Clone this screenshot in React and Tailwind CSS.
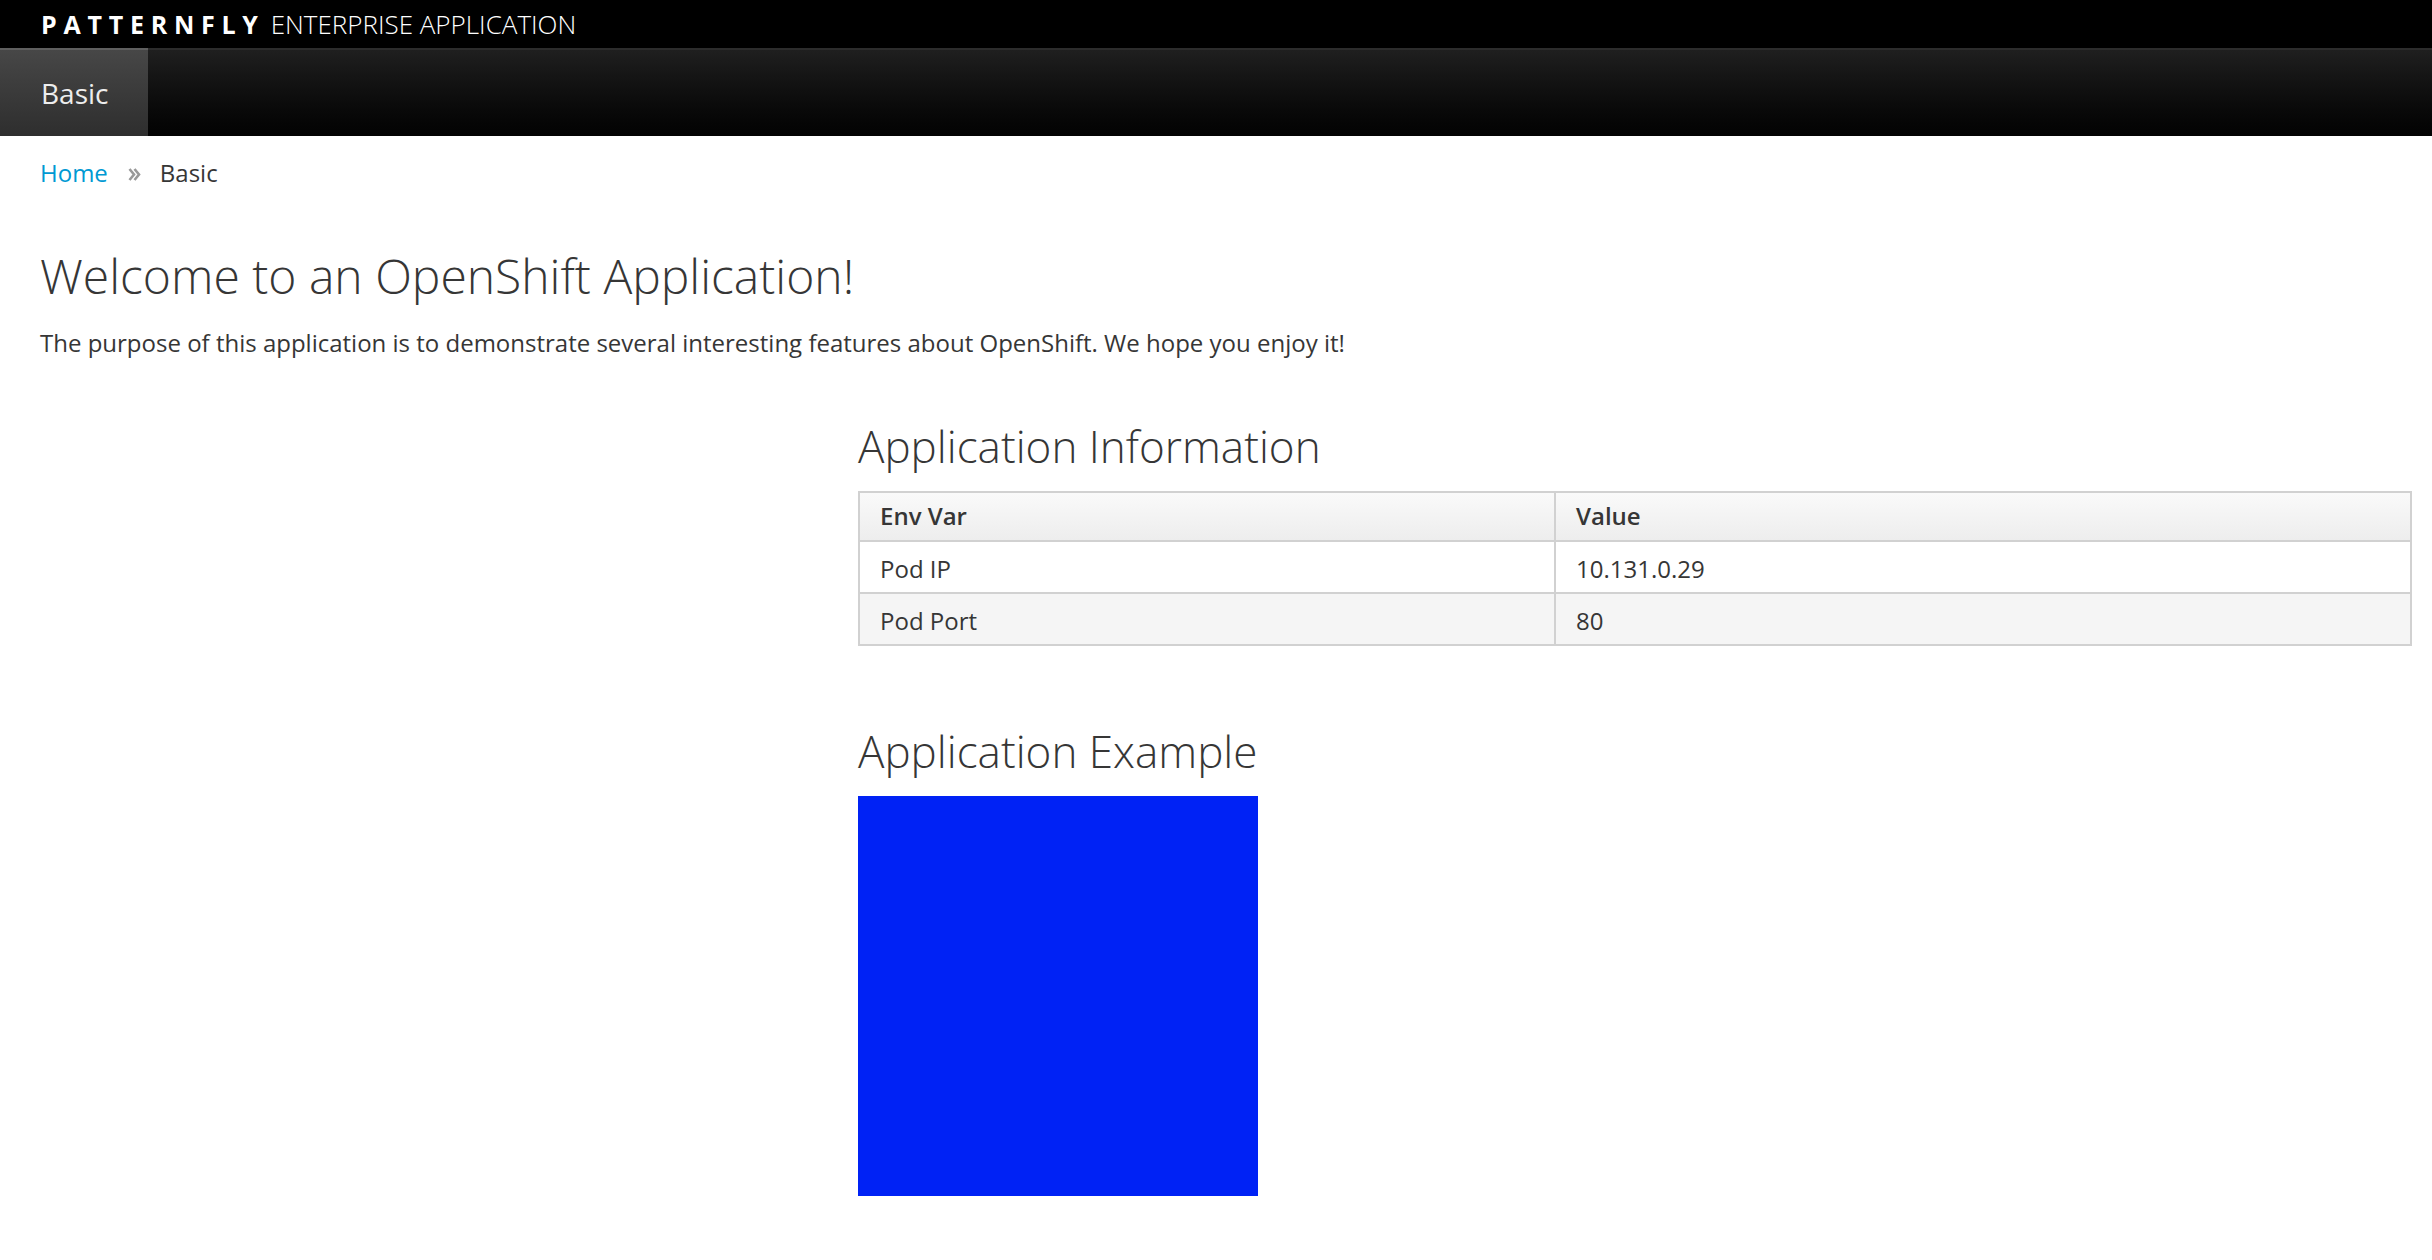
export default function App() {
  return (
    <div className="min-h-screen bg-white text-[#363636] font-['Open_Sans',sans-serif]">
      <div className="h-[48px] bg-black flex items-center pl-[41px]">
        <span className="text-white font-bold text-[25px] tracking-[0.27em] leading-none">PATTERNFLY</span>
        <span className="text-white font-light text-[26px] ml-[6px] leading-none">ENTERPRISE APPLICATION</span>
      </div>
      <div className="h-[88px] flex bg-linear-to-b from-[#1f1f1f] to-[#030303] border-t-2 border-[#2c2c2c]">
        <div className="w-[148px] -mt-[2px] h-[88px] border-t-2 border-[#5f5f5f] bg-linear-to-b from-[#474747] to-[#2e2e2e] text-[28px] text-[#ededed] pl-[41px] flex items-center">
          Basic
        </div>
      </div>

      <div className="pl-[40px] pr-[20px]">
        <div className="mt-[17px] flex items-center text-[24px] leading-[40px]">
          <a className="text-[#0099d3]">Home</a>
          <svg className="ml-[20px] mr-[19px] mt-[2px]" width="13" height="15" viewBox="0 0 13 15">
            <polyline points="1.5,2 6,7.5 1.5,13" fill="none" stroke="#999" strokeWidth="2.6" />
            <polyline points="6.5,2 11,7.5 6.5,13" fill="none" stroke="#999" strokeWidth="2.6" />
          </svg>
          <span>Basic</span>
        </div>

        <h1 className="mt-[57px] text-[48px] font-light leading-[1.1]">Welcome to an OpenShift Application!</h1>
        <p className="mt-[20px] text-[24px] leading-[40px]">
          The purpose of this application is to demonstrate several interesting features about OpenShift. We hope you enjoy it!
        </p>

        <div className="ml-[818px]">
          <h2 className="mt-[59px] text-[44px] font-light leading-[1.1]">Application Information</h2>
          <table className="mt-[21px] w-full border-collapse border-2 border-[#d1d1d1] text-[24px] leading-[40px]">
            <thead>
              <tr className="bg-linear-to-b from-[#fafafa] to-[#ededed]">
                <th className="w-[696px] border-2 border-[#d1d1d1] text-left font-semibold px-[20px] pt-[3px] pb-[4px]">Env Var</th>
                <th className="border-2 border-[#d1d1d1] text-left font-semibold px-[20px] pt-[3px] pb-[4px]">Value</th>
              </tr>
            </thead>
            <tbody>
              <tr className="bg-white">
                <td className="border-2 border-[#d1d1d1] px-[20px] pt-[7px] pb-[3px]">Pod IP</td>
                <td className="border-2 border-[#d1d1d1] px-[20px] pt-[7px] pb-[3px]">10.131.0.29</td>
              </tr>
              <tr className="bg-[#f5f5f5]">
                <td className="border-2 border-[#d1d1d1] px-[20px] pt-[7px] pb-[3px]">Pod Port</td>
                <td className="border-2 border-[#d1d1d1] px-[20px] pt-[7px] pb-[3px]">80</td>
              </tr>
            </tbody>
          </table>

          <h2 className="mt-[81px] text-[44px] font-light leading-[1.1]">Application Example</h2>
          <div className="mt-[20px] w-[400px] h-[400px] bg-[#0022f5]"></div>
        </div>
      </div>
    </div>
  );
}
